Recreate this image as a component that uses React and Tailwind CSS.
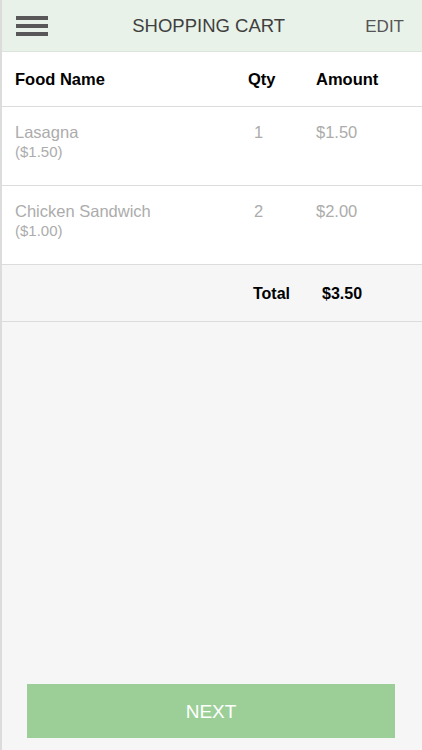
const items = [
  { name: "Lasagna", price: "($1.50)", qty: 1, amount: "$1.50" },
  { name: "Chicken Sandwich", price: "($1.00)", qty: 2, amount: "$2.00" },
];

export default function App() {
  return (
    <div
      className="flex h-[750px] w-[422px] flex-col border-l-2 border-[#dcdcdc] bg-[#f6f6f6]"
      style={{ fontFamily: '"Liberation Sans", Arial, sans-serif' }}
    >
      <header className="flex h-[52px] items-center border-b border-[#dde3dd] bg-[#e8f2e8] pl-[14px] pr-[18px]">
        <button className="flex w-[32px] flex-col gap-[4px]">
          <span className="h-[4px] w-full bg-[#585858]" />
          <span className="h-[4px] w-full bg-[#585858]" />
          <span className="h-[4px] w-full bg-[#585858]" />
        </button>
        <h1 className="flex-1 pl-[4px] pt-[1px] text-center text-[18.5px] text-[#3f3f3f]">SHOPPING CART</h1>
        <button className="pt-[3px] text-[17px] text-[#555]">EDIT</button>
      </header>

      <div className="flex h-[55px] items-center border-b border-[#dcdcdc] bg-white pl-[13px] text-[16.5px] font-bold text-black">
        <div className="flex-1">Food Name</div>
        <div className="w-[68px]">Qty</div>
        <div className="w-[106px]">Amount</div>
      </div>

      {items.map((item) => (
        <div
          key={item.name}
          className="flex h-[79px] border-b border-[#dcdcdc] bg-white pl-[13px] pt-[14px] text-[#acacac]"
        >
          <div className="flex-1">
            <div className="text-[16.5px] leading-[22px]">{item.name}</div>
            <div className="text-[15px] leading-[18px]">{item.price}</div>
          </div>
          <div className="w-[68px] pl-[6px] text-[16.5px] leading-[22px]">{item.qty}</div>
          <div className="w-[106px] text-[16.5px] leading-[22px]">{item.amount}</div>
        </div>
      ))}

      <div className="flex h-[57px] items-center border-b border-[#dcdcdc] pt-[2px] text-[16px] font-bold text-black">
        <div className="flex-1" />
        <div className="w-[69px]">Total</div>
        <div className="w-[100px]">$3.50</div>
      </div>

      <div className="flex-1" />

      <div className="pb-[12px] pl-[25px] pr-[27px]">
        <button className="flex h-[54px] w-full items-center justify-center bg-[#9ccf98] pt-[3px] text-[19px] text-white">
          NEXT
        </button>
      </div>
    </div>
  );
}
